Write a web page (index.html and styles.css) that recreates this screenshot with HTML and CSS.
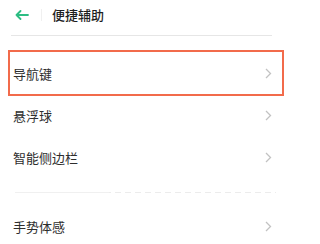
FILE: index.html
```html
<!DOCTYPE html>
<html lang="zh-CN">
<head>
<meta charset="utf-8">
<link rel="stylesheet" href="styles.css">
</head>
<body>
<div class="page">
  <header class="header">
    <svg class="back" width="14" height="10" viewBox="0 0 14 10">
      <path d="M13 5H1.5M5.5 1L1.5 5L5.5 9" fill="none" stroke="#2dbd83" stroke-width="1.8" stroke-linecap="round" stroke-linejoin="round"/>
    </svg>
    <span class="sep"></span>
    <h1 class="title">便捷辅助</h1>
  </header>
  <div class="divider"></div>
  <ul class="list">
    <li class="row highlight"><span>导航键</span><svg class="chev" width="7" height="11" viewBox="0 0 7 11"><path d="M1 1L5.5 5.5L1 10" fill="none" stroke="#c2c2c2" stroke-width="1.3"/></svg></li>
    <li class="row"><span>悬浮球</span><svg class="chev" width="7" height="11" viewBox="0 0 7 11"><path d="M1 1L5.5 5.5L1 10" fill="none" stroke="#c2c2c2" stroke-width="1.3"/></svg></li>
    <li class="row"><span>智能侧边栏</span><svg class="chev" width="7" height="11" viewBox="0 0 7 11"><path d="M1 1L5.5 5.5L1 10" fill="none" stroke="#c2c2c2" stroke-width="1.3"/></svg></li>
  </ul>
  <div class="dashed"></div>
  <ul class="list">
    <li class="row"><span>手势体感</span><svg class="chev" width="7" height="11" viewBox="0 0 7 11"><path d="M1 1L5.5 5.5L1 10" fill="none" stroke="#c2c2c2" stroke-width="1.3"/></svg></li>
  </ul>
</div>
</body>
</html>
```
FILE: styles.css
```css
html, body {
  margin: 0;
  padding: 0;
  background: #ffffff;
}
.page {
  width: 292px;
  height: 244px;
  overflow: hidden;
  font-family: "Noto Sans CJK SC", "Noto Sans", sans-serif;
  color: #2e2e2e;
}
.header {
  display: flex;
  align-items: center;
  height: 30px;
  padding-left: 15px;
}
.back {
  display: block;
  flex: none;
}
.sep {
  width: 1px;
  height: 12px;
  background: #f0f0f0;
  margin-left: 12px;
}
.title {
  margin: 0 0 0 10px;
  font-size: 13px;
  font-weight: 500;
  color: #1e1e1e;
  line-height: 30px;
}
.divider {
  height: 1px;
  background: #e6e6e6;
  margin: 5px 20px 0 11px;
}
.list {
  list-style: none;
  margin: 16px 10px 0 10px;
  padding: 0;
}
.row {
  display: flex;
  align-items: center;
  justify-content: space-between;
  height: 42px;
  padding: 0 10px 0 3px;
  font-size: 13px;
  line-height: 1;
}
.highlight {
  outline: 2px solid #f26b4b;
}
.chev {
  display: block;
  flex: none;
}
.dashed {
  height: 1px;
  margin: 14px 16px 0 15px;
  background: linear-gradient(90deg, #f0f0f0 0, #f0f0f0 36%, transparent 36%),
    repeating-linear-gradient(90deg, #ececec 0 6px, transparent 6px 10px);
}
.dashed + .list {
  margin-top: 12px;
}
```
